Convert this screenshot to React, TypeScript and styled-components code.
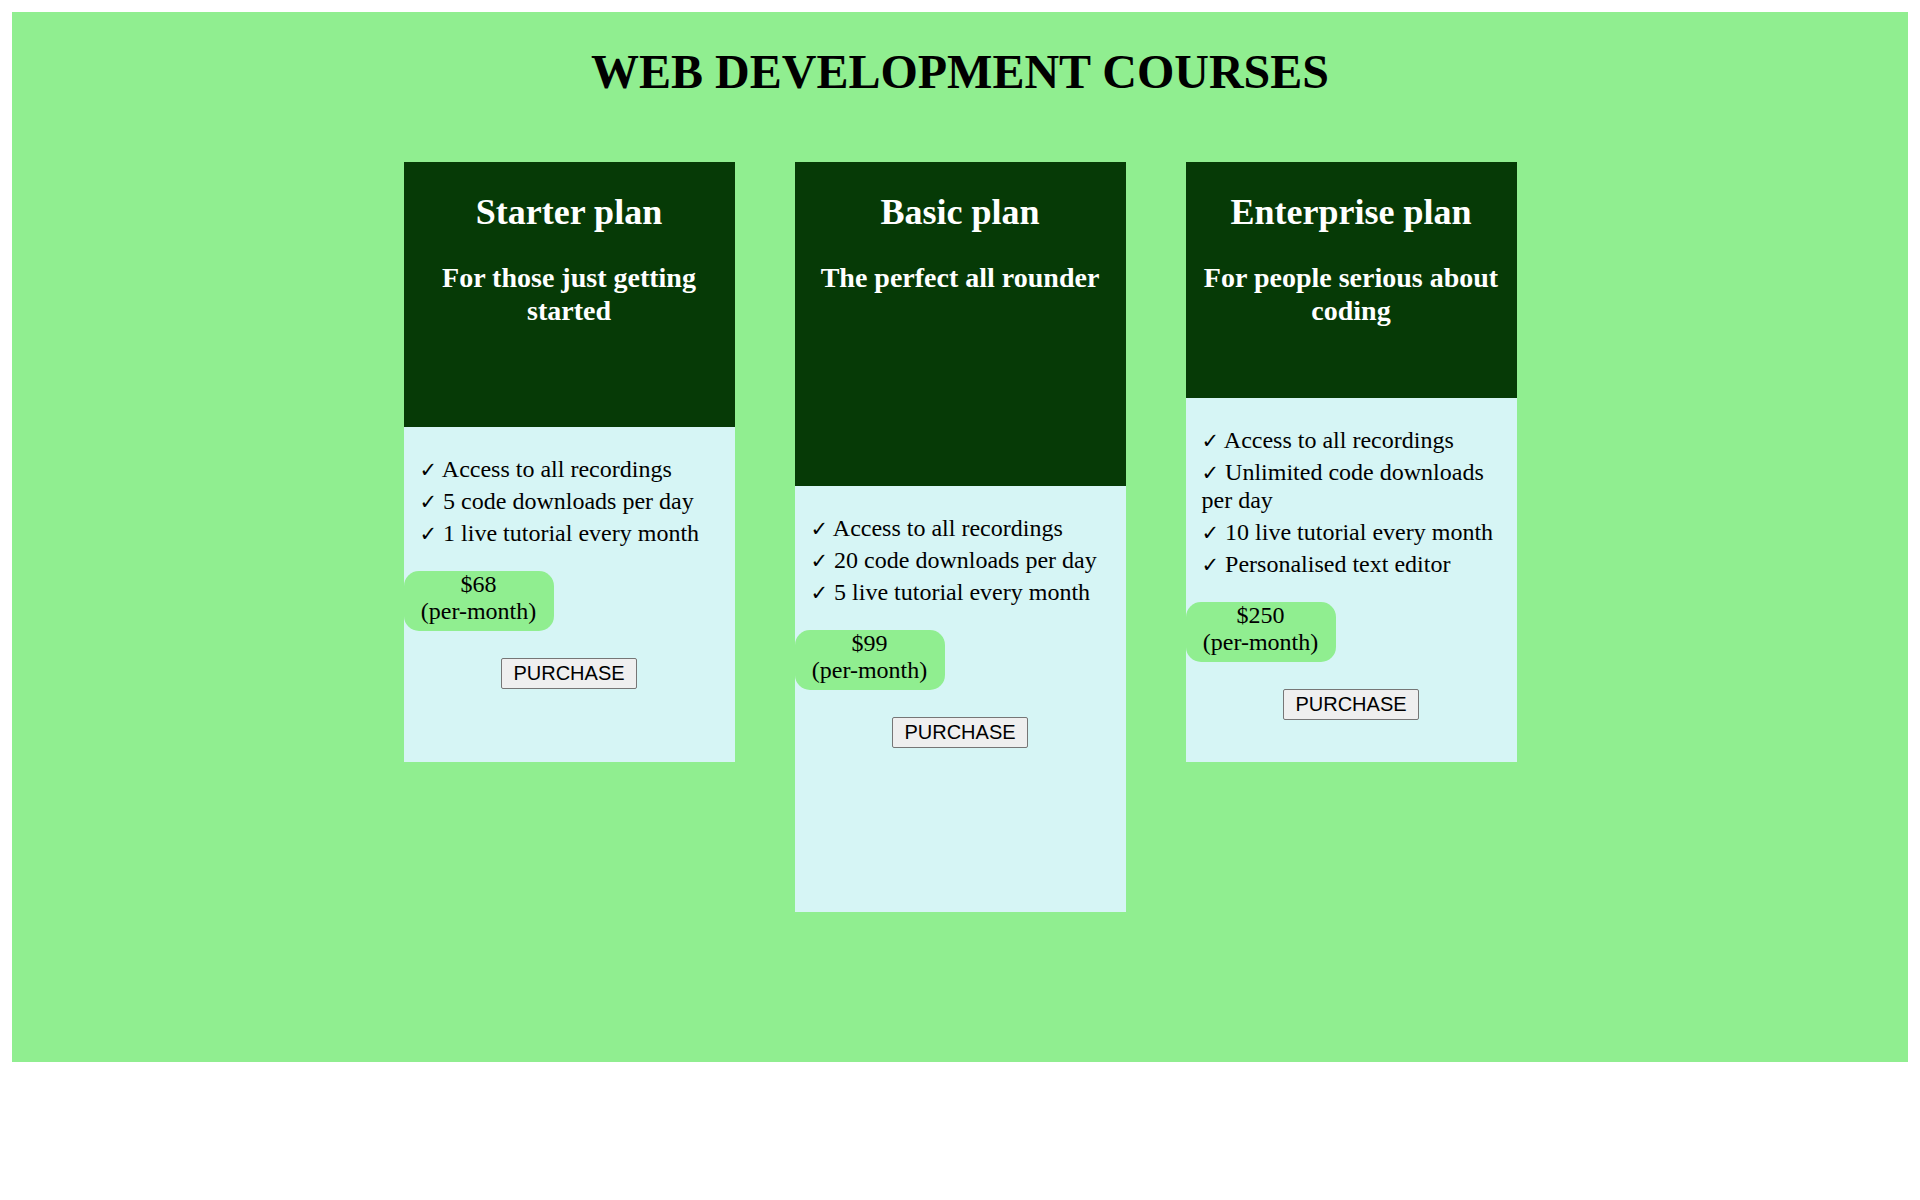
import React from "react";
import styled, { createGlobalStyle } from "styled-components";

const GlobalStyle = createGlobalStyle`
  html, body {
    background: #ffffff;
  }
  body {
    margin: 12px;
    font-family: "Liberation Serif", "Times New Roman", serif;
    color: #000;
  }
`;

const Page = styled.main`
  background: #90ee90;
  height: 1050px;
  display: flow-root;
`;

const Title = styled.h1`
  margin: 32px 0 0;
  font-family: "Liberation Serif", "Times New Roman", serif;
  font-size: 48px;
  line-height: 55px;
  font-weight: bold;
  text-align: center;
  color: #000;
`;

const CardRow = styled.section`
  margin-top: 63px;
  display: flex;
  justify-content: center;
  align-items: flex-start;
  gap: 60px;
`;

const Card = styled.article<{ $height: number }>`
  width: 331px;
  height: ${(p) => p.$height}px;
  display: flex;
  flex-direction: column;
  background: #d6f5f5;
`;

const CardHeader = styled.header<{ $height: number }>`
  height: ${(p) => p.$height}px;
  flex: none;
  box-sizing: border-box;
  padding: 30px 12px 0;
  background: #063a06;
  color: #ffffff;
  text-align: center;
`;

const PlanName = styled.h2`
  margin: 0;
  font-size: 36px;
  line-height: 1.15;
  font-weight: bold;
`;

const PlanTagline = styled.h3`
  margin: 29px 0 0;
  font-size: 28px;
  line-height: 1.15;
  font-weight: bold;
`;

const CardBody = styled.div`
  flex: 1;
  display: flex;
  flex-direction: column;
`;

const FeatureList = styled.ul`
  list-style: none;
  margin: 24px 0;
  padding: 0 16px;
`;

const Feature = styled.li`
  margin-top: 4px;
  font-size: 24px;
  line-height: 28px;
`;

const Check = styled.span`
  font-family: "DejaVu Sans", sans-serif;
  font-size: 21px;
  line-height: 0;
`;

const Price = styled.div`
  width: 150px;
  height: 60px;
  box-sizing: border-box;
  background: #90ee90;
  border-radius: 15px;
  text-align: center;
  font-size: 24px;
  line-height: 27px;
`;

const PurchaseButton = styled.button`
  align-self: center;
  margin-top: 27px;
  padding: 3px 11px;
  font-family: "Liberation Sans", Arial, sans-serif;
  font-size: 20px;
  line-height: 23px;
  color: #000;
  background: #efefef;
  border: 1px solid #767676;
  border-radius: 2px;
  cursor: pointer;
`;

type Plan = {
  name: string;
  tagline: string;
  features: string[];
  price: string;
  cardHeight: number;
  headerHeight: number;
};

const plans: Plan[] = [
  {
    name: "Starter plan",
    tagline: "For those just getting started",
    features: [
      "Access to all recordings",
      "5 code downloads per day",
      "1 live tutorial every month",
    ],
    price: "$68",
    cardHeight: 600,
    headerHeight: 265,
  },
  {
    name: "Basic plan",
    tagline: "The perfect all rounder",
    features: [
      "Access to all recordings",
      "20 code downloads per day",
      "5 live tutorial every month",
    ],
    price: "$99",
    cardHeight: 750,
    headerHeight: 324,
  },
  {
    name: "Enterprise plan",
    tagline: "For people serious about coding",
    features: [
      "Access to all recordings",
      "Unlimited code downloads per day",
      "10 live tutorial every month",
      "Personalised text editor",
    ],
    price: "$250",
    cardHeight: 600,
    headerHeight: 236,
  },
];

export default function App() {
  return (
    <>
      <GlobalStyle />
      <Page>
        <Title>WEB DEVELOPMENT COURSES</Title>
        <CardRow>
          {plans.map((plan) => (
            <Card key={plan.name} $height={plan.cardHeight}>
              <CardHeader $height={plan.headerHeight}>
                <PlanName>{plan.name}</PlanName>
                <PlanTagline>{plan.tagline}</PlanTagline>
              </CardHeader>
              <CardBody>
                <FeatureList>
                  {plan.features.map((f) => (
                    <Feature key={f}>
                      <Check>✓</Check> {f}
                    </Feature>
                  ))}
                </FeatureList>
                <Price>
                  {plan.price}
                  <br />
                  (per-month)
                </Price>
                <PurchaseButton>PURCHASE</PurchaseButton>
              </CardBody>
            </Card>
          ))}
        </CardRow>
      </Page>
    </>
  );
}
